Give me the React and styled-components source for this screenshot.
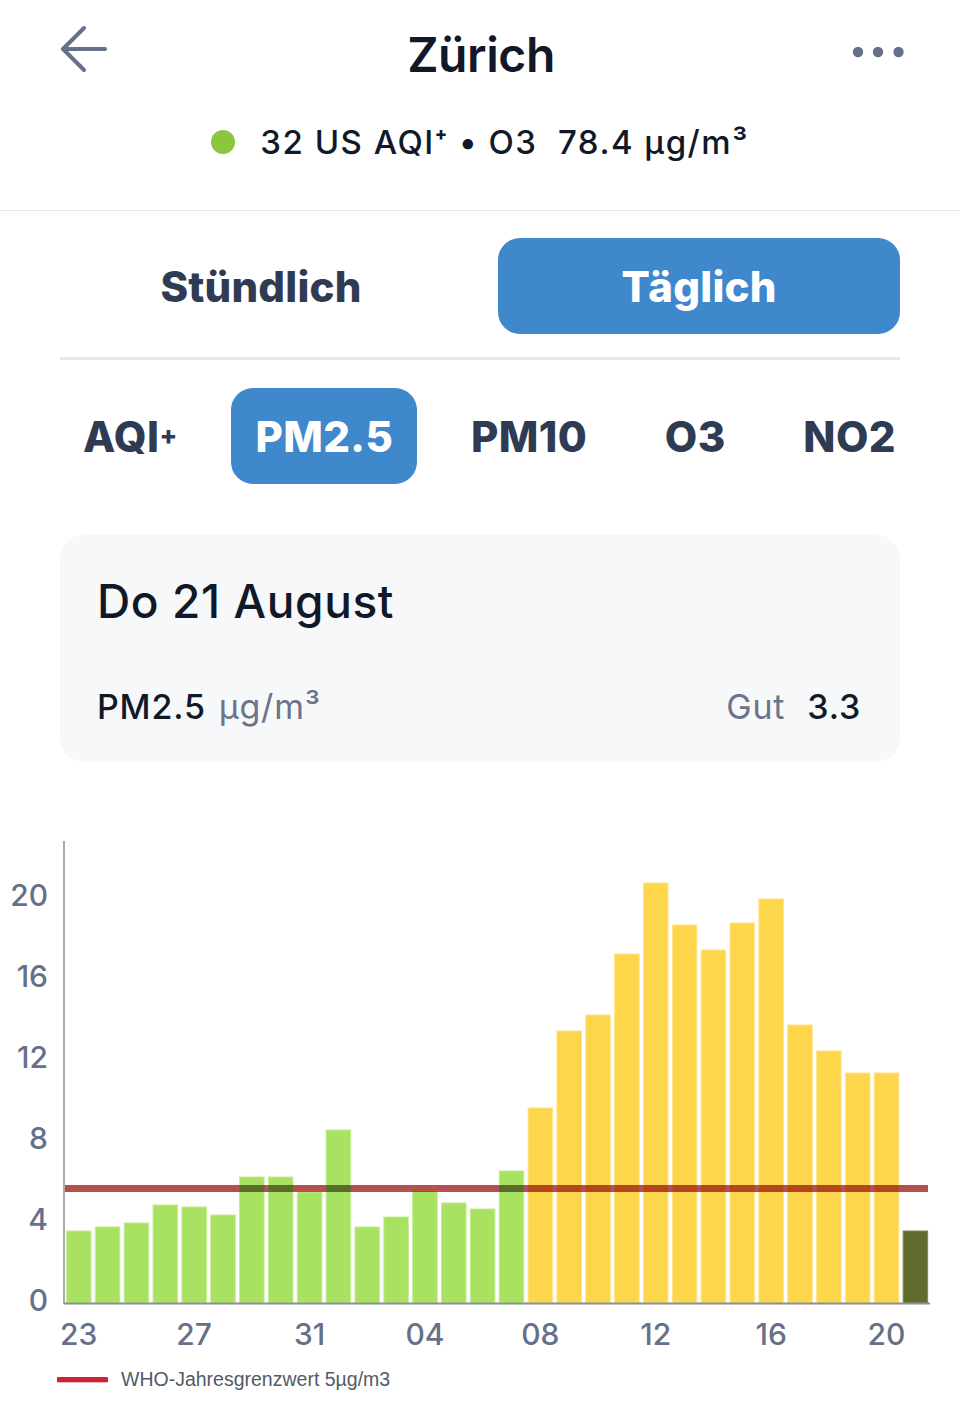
import React from "react";
import styled, { createGlobalStyle } from "styled-components";

const GlobalStyle = createGlobalStyle`
  html, body { margin: 0; padding: 0; background: #ffffff; }
  body { font-family: Inter, "Noto Sans", sans-serif; color: #111827; -webkit-font-smoothing: antialiased; }
  * { box-sizing: border-box; }
`;

const Page = styled.div`
  width: 960px;
  min-height: 1411px;
  background: #fff;
`;

const Header = styled.header`
  border-bottom: 1px solid #e7e8eb;
`;

const TopBar = styled.div`
  display: grid;
  grid-template-columns: 1fr auto 1fr;
  align-items: center;
  height: 104px;
  padding: 0 56px 0 58px;
`;

const IconButton = styled.button`
  all: unset;
  display: flex;
  align-items: center;
  justify-self: ${(p) => (p.$end ? "end" : "start")};
  color: #667189;
  margin-top: ${(p) => (p.$end ? "0" : "-6px")};
`;

const Title = styled.h1`
  margin: 5px 0 0;
  font-size: 48px;
  line-height: 56px;
  font-weight: 600;
  color: #111827;
  letter-spacing: -0.4px;
`;

const StatusRow = styled.div`
  display: flex;
  align-items: center;
  justify-content: center;
  gap: 25px;
  height: 76px;
  margin-bottom: 30px;
`;

const Dot = styled.span`
  width: 24px;
  height: 24px;
  border-radius: 50%;
  background: ${(p) => p.$color};
`;

const StatusText = styled.span`
  font-size: 33px;
  font-weight: 500;
  color: #111827;
  letter-spacing: 1.5px;
  white-space: pre;
`;

const Sup = styled.span`
  font-size: ${(p) => p.$size || 0.55}em;
  vertical-align: 0.75em;
  line-height: 0;
  font-weight: 800;
`;

const Segmented = styled.div`
  display: grid;
  grid-template-columns: 1fr 1fr;
  gap: 36px;
  margin: 0 60px;
  padding: 27px 0 23px;
  border-bottom: 3px solid #e8e8ea;
`;

const SegButton = styled.button`
  all: unset;
  display: flex;
  align-items: center;
  justify-content: center;
  height: 96px;
  border-radius: 22px;
  font-size: 42px;
  font-weight: 800;
  letter-spacing: 0.2px;
  color: ${(p) => (p.$active ? "#ffffff" : "#2f3b52")};
  background: ${(p) => (p.$active ? "#3f88cb" : "transparent")};
`;

const PollutantRow = styled.div`
  display: flex;
  justify-content: space-between;
  align-items: center;
  margin: 28px 40px 51px 59px;
`;

const PollutantTab = styled.button`
  all: unset;
  display: flex;
  align-items: center;
  height: 96px;
  padding: 0 24px;
  border-radius: 22px;
  font-size: 42px;
  font-weight: 800;
  letter-spacing: 0.4px;
  color: ${(p) => (p.$active ? "#ffffff" : "#2f3b52")};
  background: ${(p) => (p.$active ? "#3f88cb" : "transparent")};
`;

const Card = styled.section`
  margin: 0 60px;
  padding: 40px 39px 36px 37px;
  border-radius: 24px;
  background: #f7f8fa;
`;

const CardTitle = styled.h2`
  margin: 0 0 59px;
  font-size: 46px;
  line-height: 52px;
  font-weight: 500;
  letter-spacing: 0.6px;
  color: #111827;
`;

const CardRow = styled.div`
  display: flex;
  justify-content: space-between;
  align-items: center;
  height: 40px;
  font-size: 34px;
  letter-spacing: 0.8px;
`;

const Group = styled.span`
  display: flex;
  gap: ${(p) => p.$gap || 10}px;
`;

const Label = styled.span`
  color: ${(p) => (p.$muted ? "#6b7489" : "#111827")};
  font-weight: ${(p) => (p.$muted ? 400 : 500)};
`;

const ChartSvg = styled.svg`
  display: block;
  width: 960px;
  height: 590px;
`;

const AxisText = styled.text`
  font-family: Inter, "Noto Sans", sans-serif;
  font-size: 30px;
  font-weight: 500;
  fill: #667089;
`;

const Legend = styled.div`
  display: flex;
  align-items: center;
  gap: 13px;
  height: 54px;
  padding-left: 57px;
`;

const LegendSwatch = styled.span`
  width: 51px;
  height: 5px;
  border-radius: 1px;
  background: #cf2236;
  box-shadow: 0 1px 1px rgba(207, 34, 54, 0.35);
`;

const LegendText = styled.span`
  font-family: "Liberation Sans", Arial, sans-serif;
  font-size: 19.5px;
  color: #525a69;
`;

const BASE = 1303;
const tops = [
  1231, 1227, 1223, 1205, 1207, 1215, 1177, 1177, 1192, 1130,
  1227, 1217, 1191, 1203, 1209, 1171, 1108, 1031, 1015, 954,
  883, 925, 950, 923, 899, 1025, 1051, 1073, 1073, 1231,
];
const X0 = 66.5;
const PITCH = 28.85;
const BAR_W = 24.5;
const LINE_TOP = 1185;
const LINE_H = 7;

const barColor = (i) => {
  if (i === 29) return { fill: "#606b2e", stroke: "#7d8c4c", overlap: null };
  if (i < 16) return { fill: "#a9e160", stroke: "#c4ec94", overlap: "#5b6b2c" };
  return { fill: "#fdd64b", stroke: "#fee488", overlap: "#b4461e" };
};

const yTicks = [0, 4, 8, 12, 16, 20];
const xTicks = ["23", "27", "31", "04", "08", "12", "16", "20"];

function Chart() {
  return (
    <ChartSvg viewBox="0 762 960 590">
      {tops.map((t, i) => {
        const c = barColor(i);
        const x = X0 + i * PITCH;
        return (
          <rect key={i} x={x} y={t} width={BAR_W} height={BASE - t} fill={c.fill} stroke={c.stroke} strokeWidth="1" />
        );
      })}
      <rect x="65" y={LINE_TOP} width="863" height={LINE_H} fill="#b5504c" />
      {tops.map((t, i) => {
        const c = barColor(i);
        const x = X0 + i * PITCH;
        const overlapTop = Math.max(t, LINE_TOP);
        const overlapH = LINE_TOP + LINE_H - overlapTop;
        if (!c.overlap || overlapH <= 0) return null;
        return <rect key={`o${i}`} x={x} y={overlapTop} width={BAR_W} height={overlapH} fill={c.overlap} />;
      })}
      <line x1="64" y1="841" x2="64" y2="1304" stroke="#8d8f94" strokeWidth="1.5" />
      <line x1="63.5" y1="1303.5" x2="930" y2="1303.5" stroke="#8d8f94" strokeWidth="2" />
      {yTicks.map((v) => (
        <AxisText key={v} x="48" y={1300 - v * 20.25} textAnchor="end" dominantBaseline="central">
          {v}
        </AxisText>
      ))}
      {xTicks.map((l, k) => (
        <AxisText key={l} x={X0 + k * 4 * PITCH + BAR_W / 2} y="1334" textAnchor="middle" dominantBaseline="central">
          {l}
        </AxisText>
      ))}
    </ChartSvg>
  );
}

const ArrowLeft = () => (
  <svg width="50" height="48" viewBox="0 0 50 48" fill="none" stroke="currentColor" strokeWidth="4" strokeLinecap="round" strokeLinejoin="round">
    <path d="M47 24H5" />
    <path d="M26 3L5 24l21 21" />
  </svg>
);

const MoreDots = () => (
  <svg width="52" height="12" viewBox="0 0 52 12" fill="currentColor">
    <circle cx="6" cy="6" r="5.2" />
    <circle cx="26" cy="6" r="5.2" />
    <circle cx="46.5" cy="6" r="5.2" />
  </svg>
);

export default function App() {
  return (
    <Page>
      <GlobalStyle />
      <Header>
        <TopBar>
          <IconButton aria-label="Zurück"><ArrowLeft /></IconButton>
          <Title>Zürich</Title>
          <IconButton $end aria-label="Mehr"><MoreDots /></IconButton>
        </TopBar>
        <StatusRow>
          <Dot $color="#8cc63f" />
          <StatusText>
            32 US AQI<Sup>+</Sup> • O3  78.4 µg/m³
          </StatusText>
        </StatusRow>
      </Header>

      <Segmented>
        <SegButton>Stündlich</SegButton>
        <SegButton $active>Täglich</SegButton>
      </Segmented>

      <PollutantRow>
        <PollutantTab>AQI<Sup $size={0.62}>+</Sup></PollutantTab>
        <PollutantTab $active>PM2.5</PollutantTab>
        <PollutantTab>PM10</PollutantTab>
        <PollutantTab>O3</PollutantTab>
        <PollutantTab>NO2</PollutantTab>
      </PollutantRow>

      <Card>
        <CardTitle>Do 21 August</CardTitle>
        <CardRow>
          <Group $gap={13}>
            <Label>PM2.5</Label>
            <Label $muted>µg/m³</Label>
          </Group>
          <Group $gap={22}>
            <Label $muted>Gut</Label>
            <Label>3.3</Label>
          </Group>
        </CardRow>
      </Card>

      <Chart />

      <Legend>
        <LegendSwatch />
        <LegendText>WHO-Jahresgrenzwert 5µg/m3</LegendText>
      </Legend>
    </Page>
  );
}
